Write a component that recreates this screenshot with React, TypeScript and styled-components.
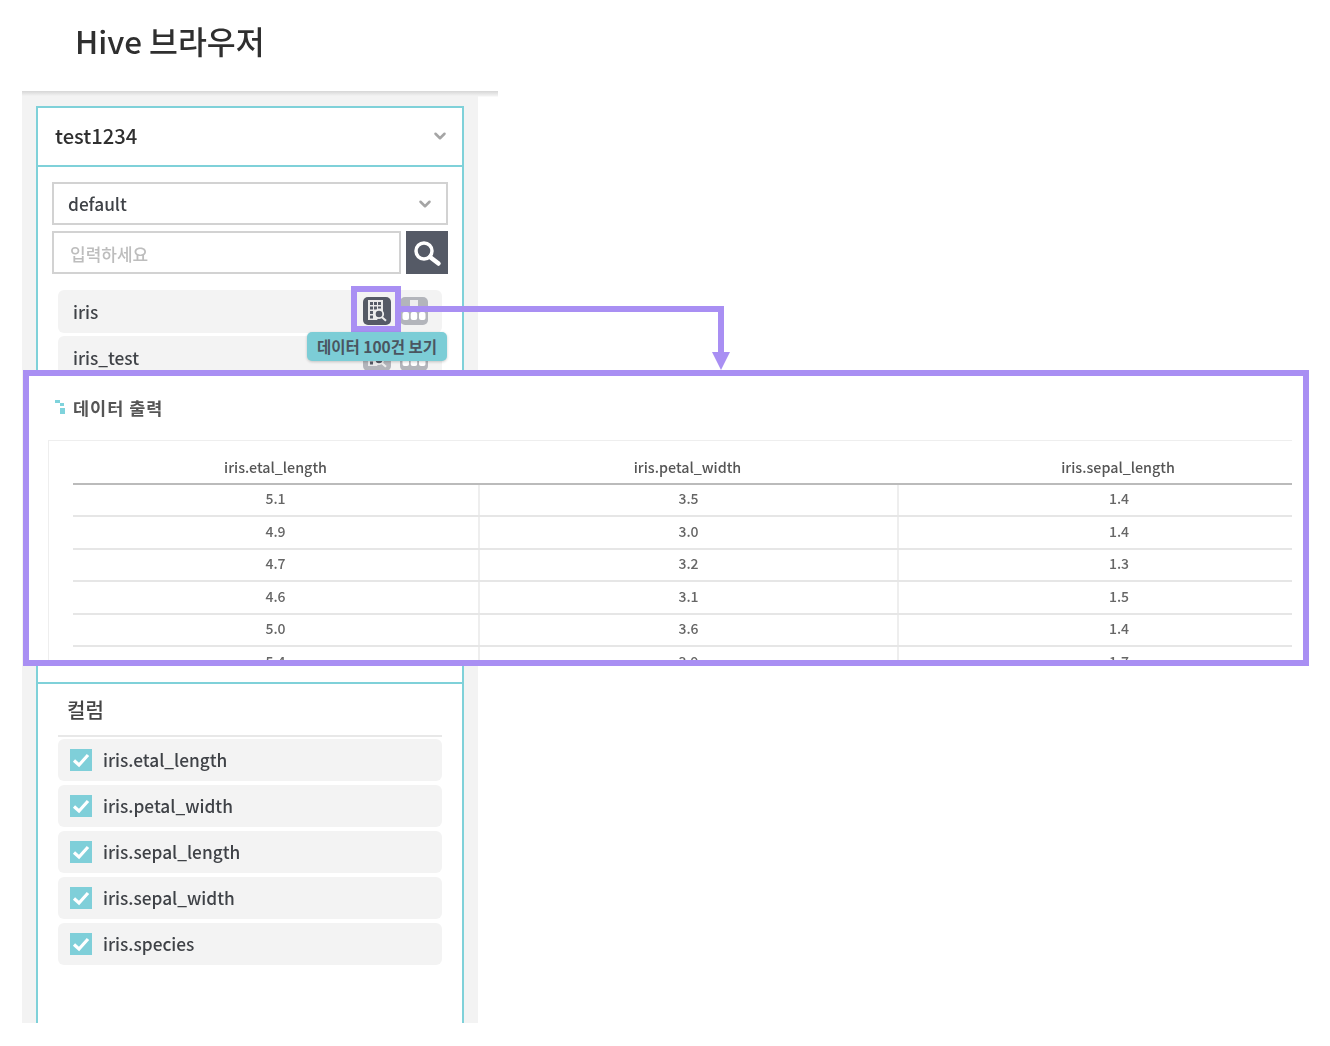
import React from 'react';
import styled, {createGlobalStyle} from 'styled-components';
import {ChevronDown} from 'lucide-react';

const GlobalStyle = createGlobalStyle`
  html, body {
    margin: 0;
    padding: 0;
    background: #fff;
  }
  body {
    font-family: "Noto Sans CJK KR", "Noto Sans", sans-serif;
    color: #3a3a3a;
  }
  * {
    box-sizing: border-box;
  }
`;

const tables = ['iris', 'iris_test'];
const columns = ['iris.etal_length', 'iris.petal_width', 'iris.sepal_length', 'iris.sepal_width', 'iris.species'];
const headers = ['iris.etal_length', 'iris.petal_width', 'iris.sepal_length'];
const rows = [
    ['5.1', '3.5', '1.4'],
    ['4.9', '3.0', '1.4'],
    ['4.7', '3.2', '1.3'],
    ['4.6', '3.1', '1.5'],
    ['5.0', '3.6', '1.4'],
    ['5.4', '3.9', '1.7'],
];

const SearchGlyph = () => (
    <svg width="42" height="43" viewBox="0 0 42 43">
        <circle cx="18" cy="20" r="8" fill="none" stroke="#fff" strokeWidth="3.500"/>
        <path d="M24 26l8.500 6.500" stroke="#fff" strokeWidth="4.500" strokeLinecap="round"/>
    </svg>
);

const PreviewIcon = () => (
    <svg width="22" height="23" viewBox="0 0 22 23">
        <path d="M2 1h15v11l-6 9H2z" fill="#e9e9ea"/>
        <path d="M4 3h3v3H4zM8 3h3v3H8zM12 3h3v3h-3zM4 7.500h3v3H4zM8 7.500h3v3H8zM12 7.500h3v2h-3zM4 12h3v3H4zM4 16.500h3v3H4z" fill="#555a66"/>
        <circle cx="13" cy="15" r="4.200" fill="#555a66" stroke="#eeeeee" strokeWidth="1.800"/>
        <path d="M16 18.200l4 3.600" stroke="#eeeeee" strokeWidth="2"/>
    </svg>
);

const SchemaIcon = () => (
    <svg width="26" height="26" viewBox="0 0 26 26">
        <rect x="9" y="2" width="8" height="8" fill="#eeeeee"/>
        <rect x="1.500" y="14" width="6.500" height="8" rx="2" fill="#fff"/>
        <rect x="9.700" y="14" width="6.500" height="8" rx="2" fill="#fff"/>
        <rect x="18" y="14" width="6.500" height="8" rx="2" fill="#fff"/>
    </svg>
);

const SectionMark = () => (
    <svg width="11" height="14" viewBox="0 0 11 14">
        <path d="M0 0h5v3H0zM5 3h4v3H5zM5 8h5v2H5zM5 10h5v4H5z" fill="#7fd3dc"/>
    </svg>
);

const CheckMark = () => (
    <svg width="18" height="15" viewBox="0 0 18 15">
        <path d="M2 7.500l5 4.500 9-10" fill="none" stroke="#fff" strokeWidth="3.200"/>
    </svg>
);

const App: React.FC = () => {
    return (
        <Page>
            <GlobalStyle/>
            <Title>Hive 브라우저</Title>
            <Sidebar>
                <Panel>
                    <PanelHeader>
                        <HeaderLabel>test1234</HeaderLabel>
                        <ChevronDown size={18} strokeWidth={3.4} color="#a5a5a5"/>
                    </PanelHeader>
                    <TableSection>
                        <SelectBox>
                            <FieldLabel>default</FieldLabel>
                            <ChevronDown size={18} strokeWidth={3.4} color="#a5a5a5"/>
                        </SelectBox>
                        <SearchRow>
                            <SearchInput>입력하세요</SearchInput>
                            <SearchButton><SearchGlyph/></SearchButton>
                        </SearchRow>
                        <TableList>
                            {tables.map((name, i) => (
                                <TableItem key={name}>
                                    <FieldLabel>{name}</FieldLabel>
                                    <TableActions>
                                        <ActionButton $dark={i === 0}><PreviewIcon/></ActionButton>
                                        <ActionButton><SchemaIcon/></ActionButton>
                                    </TableActions>
                                </TableItem>
                            ))}
                        </TableList>
                    </TableSection>
                    <ColumnSection>
                        <ColumnTitle>컬럼</ColumnTitle>
                        <ColumnList>
                            {columns.map(name => (
                                <ColumnItem key={name}>
                                    <CheckBox><CheckMark/></CheckBox>
                                    <FieldLabel>{name}</FieldLabel>
                                </ColumnItem>
                            ))}
                        </ColumnList>
                    </ColumnSection>
                </Panel>
            </Sidebar>

            <Highlight/>
            <Tooltip>데이터 100건 보기</Tooltip>
            <ConnectorH/>
            <ConnectorV/>
            <ArrowHead/>

            <OutputBox>
                <OutputTitle><SectionMark/>데이터 출력</OutputTitle>
                <TableCard>
                    <HeadRow>
                        {headers.map(h => <HeadCell key={h}>{h}</HeadCell>)}
                    </HeadRow>
                    {rows.map((row, i) => (
                        <BodyRow key={i}>
                            {row.map((v, j) => <BodyCell key={j}>{v}</BodyCell>)}
                        </BodyRow>
                    ))}
                </TableCard>
            </OutputBox>
        </Page>
    );
};

export default App;

const Page = styled.div`
  position: relative;
  width: 1330px;
  height: 1046px;
  overflow: hidden;
  padding: 0 0 0 22px;
`;

const Title = styled.h1`
  margin: 0;
  height: 91px;
  padding: 17px 0 0 53px;
  font-size: 31.400px;
  line-height: 48px;
  font-weight: 500;
  color: #2f2f2f;
  filter: blur(0.5px);
`;

const Sidebar = styled.div`
  width: 476px;
  height: 932px;
  padding: 15px 0 0 14px;
  background: linear-gradient(#d6d6d6, #f3f3f3 5px, #fff 6px) no-repeat;
  background-color: #fff;
  position: relative;
  filter: blur(0.55px);
  &::before {
    content: "";
    position: absolute;
    left: 0;
    top: 5px;
    bottom: 0;
    width: 456px;
    background: #f3f3f3;
  }
`;

const Panel = styled.div`
  position: relative;
  width: 428px;
  height: 917px;
  background: #fff;
  border: 2px solid #7fd1d9;
  border-bottom: 0;
`;

const PanelHeader = styled.div`
  height: 59px;
  padding: 0 13px 2px 17px;
  display: flex;
  align-items: center;
  justify-content: space-between;
  border-bottom: 2px solid #7fd1d9;
`;

const HeaderLabel = styled.span`
  font-size: 20.200px;
  font-weight: 500;
  color: #2f2f2f;
`;

const FieldLabel = styled.span`
  font-size: 17.300px;
  font-weight: 500;
  color: #3f4247;
`;

const TableSection = styled.div`
  height: 517px;
  padding: 15px 14px 0;
  border-bottom: 2px solid #7fd1d9;
  overflow: hidden;
`;

const SelectBox = styled.div`
  height: 43px;
  padding: 0 12px 0 14px;
  display: flex;
  align-items: center;
  justify-content: space-between;
  border: 2px solid #d2d2d2;
`;

const SearchRow = styled.div`
  display: flex;
  justify-content: space-between;
  margin-top: 6px;
`;

const SearchInput = styled.div`
  width: 349px;
  height: 43px;
  padding: 2px 16px 0;
  display: flex;
  align-items: center;
  border: 2px solid #d2d2d2;
  font-size: 17px;
  font-weight: 500;
  color: #bdbdbd;
`;

const SearchButton = styled.div`
  width: 42px;
  height: 43px;
  background: #555a66;
  display: flex;
`;

const TableList = styled.div`
  margin: 16px 6px 0;
  display: flex;
  flex-direction: column;
  gap: 3px;
`;

const TableItem = styled.div`
  height: 43px;
  padding: 0 14px 0 15px;
  display: flex;
  align-items: center;
  justify-content: space-between;
  background: #f3f3f3;
  border-radius: 6px;
`;

const TableActions = styled.div`
  display: flex;
  gap: 9px;
  margin-top: -2px;
`;

const ActionButton = styled.div<{$dark?: boolean}>`
  width: 28px;
  height: 28px;
  border-radius: 5px;
  background: ${props => props.$dark ? '#555a66' : '#b3b5bb'};
  display: flex;
  align-items: center;
  justify-content: center;
`;

const ColumnSection = styled.div`
  padding: 0 20px;
`;

const ColumnTitle = styled.div`
  height: 53px;
  padding: 0 0 1px 9px;
  display: flex;
  align-items: center;
  font-size: 20px;
  font-weight: 500;
  color: #444;
  border-bottom: 2px solid #e8e8e8;
`;

const ColumnList = styled.div`
  margin-top: 2px;
  display: flex;
  flex-direction: column;
  gap: 4px;
`;

const ColumnItem = styled.div`
  height: 42px;
  padding: 0 12px 1px;
  display: flex;
  align-items: center;
  gap: 11px;
  background: #f3f3f3;
  border-radius: 6px;
`;

const CheckBox = styled.div`
  width: 22px;
  height: 22px;
  margin-top: 1px;
  background: #7fcfd9;
  display: flex;
  align-items: center;
  justify-content: center;
`;

const Highlight = styled.div`
  position: absolute;
  left: 351px;
  top: 286px;
  width: 50px;
  height: 46px;
  border: 6px solid #a98ff3;
`;

const Tooltip = styled.div`
  position: absolute;
  left: 307px;
  top: 332px;
  width: 140px;
  height: 29px;
  padding-bottom: 2px;
  display: flex;
  align-items: center;
  justify-content: center;
  background: #7ccdd6;
  border-radius: 5px;
  box-shadow: 0 1px 3px rgba(0, 0, 0, 0.2);
  font-size: 15.500px;
  font-weight: 700;
  color: #4a5560;
  white-space: nowrap;
`;

const ConnectorH = styled.div`
  position: absolute;
  left: 401px;
  top: 306px;
  width: 323px;
  height: 6px;
  background: #a98ff3;
`;

const ConnectorV = styled.div`
  position: absolute;
  left: 718px;
  top: 306px;
  width: 6px;
  height: 48px;
  background: #a98ff3;
`;

const ArrowHead = styled.div`
  position: absolute;
  left: 712px;
  top: 352px;
  width: 0;
  height: 0;
  border-left: 9px solid transparent;
  border-right: 9px solid transparent;
  border-top: 18px solid #a98ff3;
`;

const OutputBox = styled.div`
  position: absolute;
  left: 23px;
  top: 370px;
  width: 1286px;
  height: 296px;
  padding: 0 11px 0 19px;
  background: #fff;
  border: 6px solid #a98ff3;
  overflow: hidden;
`;

const OutputTitle = styled.div`
  height: 64px;
  padding: 0 0 2px 7px;
  display: flex;
  align-items: center;
  gap: 7px;
  font-size: 17.500px;
  font-weight: 700;
  letter-spacing: 1px;
  color: #555;
  filter: blur(0.5px);
`;

const TableCard = styled.div`
  height: 260px;
  padding: 0 0 0 24px;
  border-top: 1px solid #eee;
  border-left: 1px solid #eee;
  overflow: hidden;
  filter: blur(0.4px);
`;

const HeadRow = styled.div`
  display: grid;
  grid-template-columns: 405px 419px 442px;
  height: 44px;
  margin-bottom: -0.500px;
  align-items: end;
  padding-bottom: 7px;
  border-bottom: 2px solid #bbb;
  width: 1266px;
`;

const HeadCell = styled.div`
  text-align: center;
  font-size: 14.300px;
  font-weight: 500;
  line-height: 18px;
  color: #555;
`;

const BodyRow = styled.div`
  display: grid;
  grid-template-columns: 405px 419px 442px;
  height: 32.500px;
  width: 1266px;
  border-bottom: 2px solid #e6e6e6;
`;

const BodyCell = styled.div`
  display: flex;
  align-items: center;
  justify-content: center;
  padding-bottom: 3px;
  font-size: 14px;
  font-weight: 500;
  color: #666;
  & + & {
    border-left: 2px solid #eee;
  }
`;
